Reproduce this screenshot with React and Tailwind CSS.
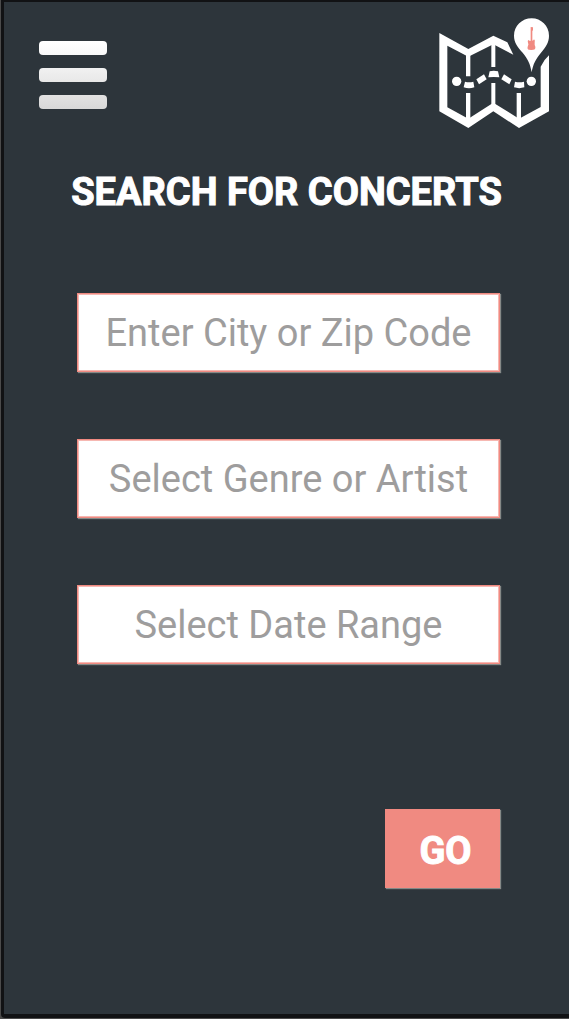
const fields = [
  { id: "place", label: "Enter City or Zip Code" },
  { id: "genre", label: "Select Genre or Artist" },
  { id: "dates", label: "Select Date Range" },
];

function MenuIcon() {
  return (
    <span className="flex flex-col gap-[13px]">
      <span className="h-3.5 w-[68px] rounded bg-linear-to-b from-white to-[#f8f8f8]" />
      <span className="h-3.5 w-[68px] rounded bg-linear-to-b from-[#f1f1f1] to-[#e8e8e8]" />
      <span className="h-3.5 w-[68px] rounded bg-linear-to-b from-[#e2e2e2] to-[#d8d8d8]" />
    </span>
  );
}

function MapIcon() {
  return (
    <svg viewBox="27 24 330 330" className="size-[110px]" aria-hidden="true">
      <g fill="#fff">
        {/* folded sheet outline */}
        <path d="M28 69 L115 117 L190 77 L232 97 L250 134 L190 103 L115 140 L52 107 V292 L115 326 L190 278 L267 326 L332 291 V170 Q341 150 357 136 V304 L267 354 L190 304 L115 354 L28 304 Z" />
        {/* creases */}
        <path d="M108 132 H121 V199 H108 Z M108 249 H121 V330 H108 Z M184 98 H196 V171 H184 Z M184 219 H196 V284 H184 Z M260 249 H273 V330 H260 Z" />
        {/* route */}
        <circle cx="80" cy="214" r="14" />
        <circle cx="304" cy="214" r="14" />
        <path d="M105 215 Q117 218 130 215 L133 232 Q117 238 101 232 Z" />
        <path d="M139 208 L162 193 L170 208 L147 223 Z" />
        <path d="M179 184 Q191 181 204 184 L208 202 Q191 200 175 202 Z" />
        <path d="M222 193 L245 208 L238 223 L214 208 Z" />
        <path d="M255 215 Q268 218 282 215 L283 232 Q268 237 252 232 Z" />
        {/* pin */}
        <path d="M305 25 C333 25 357 48 357 77 C357 97 347 112 333 128 C318 146 309 162 305 187 C301 162 293 146 278 128 C263 112 252 97 252 77 C252 48 276 25 305 25 Z" />
      </g>
      {/* guitar */}
      <path fill="#f08a81" d="M302 51 L309 52 V60 L307 64 V92 L310 91 L312 88 Q316 90 314 98 Q313 104 316 110 Q317 119 310 119 L304 120 L297 119 Q291 118 293 110 Q297 103 294 98 Q292 92 295 90 L300 93 L302 92 Z" />
    </svg>
  );
}

export default function App() {
  return (
    <div className="flex min-h-screen flex-col bg-[#4b4b4b] pb-px pl-px font-[Roboto,sans-serif]">
      <main className="flex grow flex-col rounded-bl border-t-2 border-b-4 border-l-[3px] border-[#111214] bg-[#2d353b]">
        <header className="flex items-start justify-between pt-4 pr-5 pl-[35px]">
          <button type="button" aria-label="Menu" className="mt-[23px]">
            <MenuIcon />
          </button>
          <a href="#map" aria-label="Concert map">
            <MapIcon />
          </a>
        </header>

        <h1 className="mt-[41px] text-center text-[38px] leading-[46px] font-bold text-white [-webkit-text-stroke:1px_white]">
          SEARCH FOR CONCERTS
        </h1>

        <form className="mt-[78px] flex flex-col pr-[69px] pl-[73px]">
          <div className="flex flex-col gap-[67px]">
            {fields.map(({ id, label }) => (
              <input
                key={id}
                id={id}
                type="text"
                aria-label={label}
                placeholder={label}
                className="h-[79px] w-full border border-[#f08a81] bg-white text-center text-[38px] text-[#2d353b] shadow-[1px_1px_1px_#858987,inset_0_0_0_1px_#f6b8b2] outline-none placeholder:text-[#9e9d9d] placeholder:opacity-100"
              />
            ))}
          </div>
          <button
            type="submit"
            className="mt-[145px] h-[79px] w-[115px] self-end bg-[#f08a81] pt-1.5 pl-1.5 text-[38px] font-bold text-white shadow-[1px_1px_1px_#858987] [-webkit-text-stroke:1px_white]"
          >
            GO
          </button>
        </form>
      </main>
    </div>
  );
}
